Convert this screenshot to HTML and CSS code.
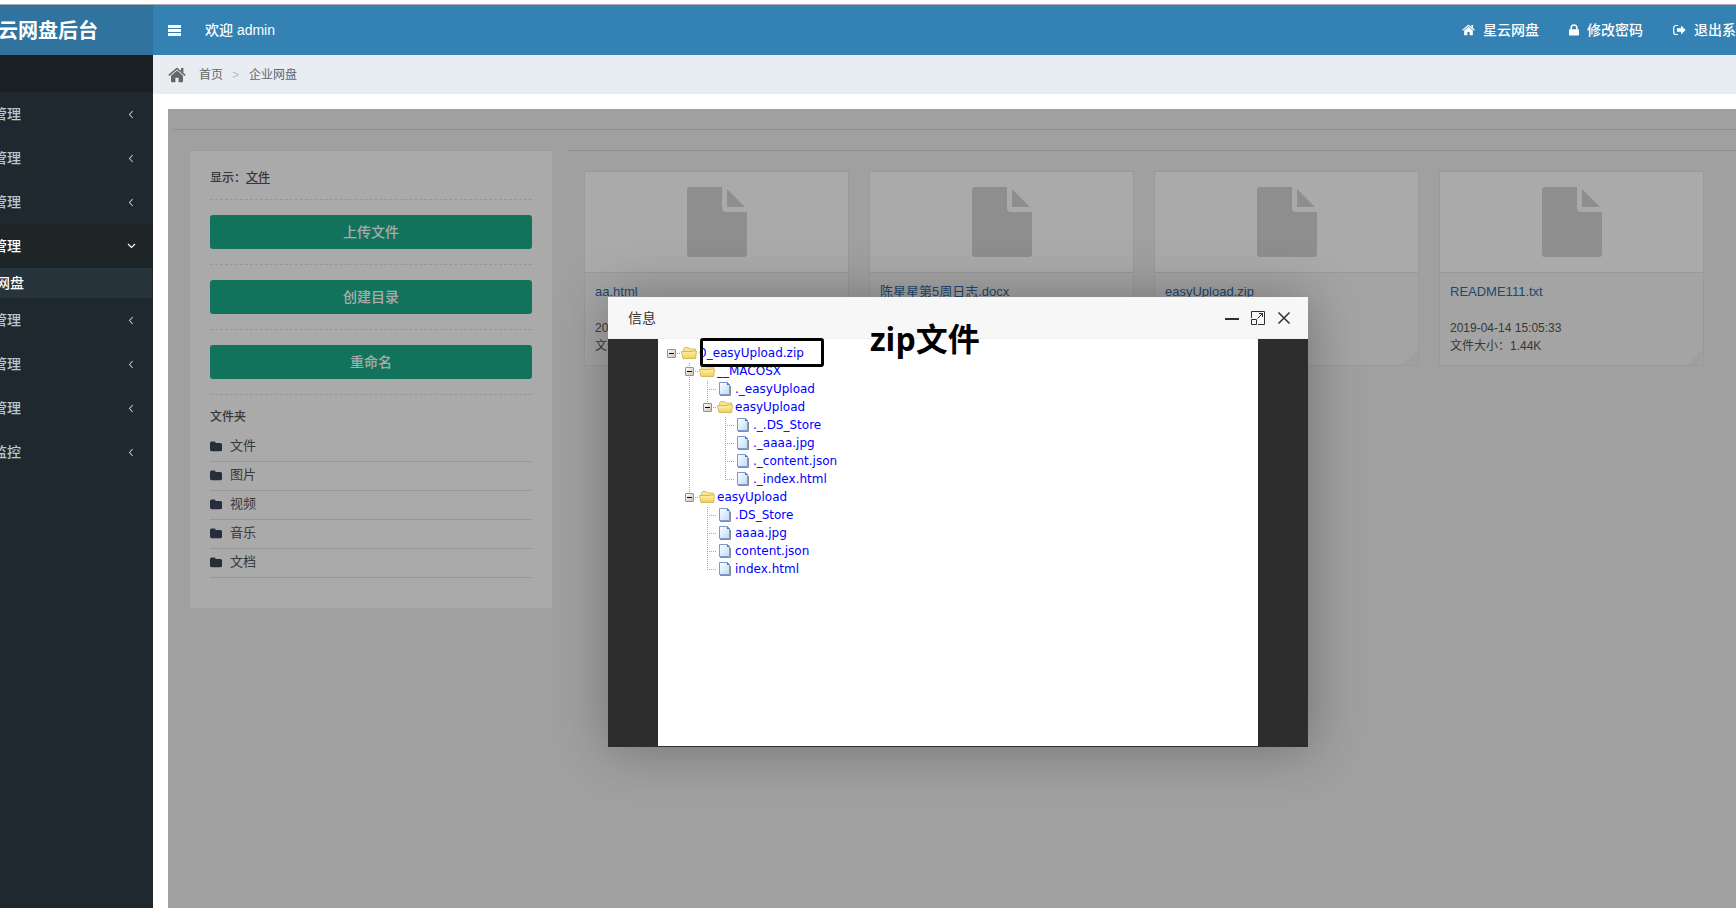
FILE: index.html
```html
<!DOCTYPE html>
<html lang="zh-CN">
<head>
<meta charset="utf-8">
<title>星云网盘后台</title>
<link rel="stylesheet" href="styles.css">
</head>
<body>
<svg class="defs" aria-hidden="true">
  <defs>
    <linearGradient id="gFolder" x1="0" y1="0" x2="0" y2="1"><stop offset="0" stop-color="#fdf3a8"/><stop offset="1" stop-color="#f0cf5e"/></linearGradient>
    <linearGradient id="gPage" x1="0" y1="0" x2="1" y2="1"><stop offset="0" stop-color="#ffffff"/><stop offset="1" stop-color="#b9dcfa"/></linearGradient>
    <linearGradient id="gBox" x1="0" y1="0" x2="1" y2="1"><stop offset="0" stop-color="#ffffff"/><stop offset="1" stop-color="#c9c2b4"/></linearGradient>
  </defs>
  <symbol id="left" viewBox="0 0 6 9"><path d="M4.700 1 1.500 4.500 4.700 8" fill="none" stroke="currentColor" stroke-width="1.100"/></symbol>
  <symbol id="down" viewBox="0 0 9 6"><path d="M1 1 4.500 4.500 8 1" fill="none" stroke="currentColor" stroke-width="1.200"/></symbol>
  <symbol id="home" viewBox="0 0 18 16"><path d="M9 3.600 15 8.700V14.500a.8.8 0 0 1-.8.8H10.600V10.800H7.400V15.300H3.800A.8.8 0 0 1 3 14.500V8.700Z" fill="currentColor"/><path d="M.8 8.400 9 1.500 17.200 8.400" fill="none" stroke="currentColor" stroke-width="1.600"/><path d="M13 1h2.400v5L13 4Z" fill="currentColor"/></symbol>
  <symbol id="lock" viewBox="0 0 10 12"><rect y="5.200" width="10" height="6.300" rx=".8" fill="currentColor"/><path d="M2.200 5.500V3.800a2.800 2.800 0 0 1 5.600 0v1.700" fill="none" stroke="currentColor" stroke-width="1.600"/></symbol>
  <symbol id="exit" viewBox="0 0 13 12"><path d="M5 1.500H3A2.300 2.300 0 0 0 .7 3.800v4.400A2.300 2.300 0 0 0 3 10.500h2" fill="none" stroke="currentColor" stroke-width="1.200"/><path d="M4 4.300h4V1.500L12.700 6 8 10.500V7.700H4Z" fill="currentColor"/></symbol>
  <symbol id="folder" viewBox="0 0 12 11"><path d="M0 2A1.500 1.500 0 0 1 1.500.5h2.700A1.400 1.400 0 0 1 5.600 1.900V2h4.900A1.500 1.500 0 0 1 12 3.500v5A1.700 1.700 0 0 1 10.300 10.300H1.700A1.700 1.700 0 0 1 0 8.600Z" fill="currentColor"/></symbol>
  <symbol id="file" viewBox="0 0 60 70"><path d="M3 0H35V21a4 4 0 0 0 4 4H60V67a3 3 0 0 1-3 3H3a3 3 0 0 1-3-3V3a3 3 0 0 1 3-3ZM40 2 58 20H40Z" fill="currentColor"/></symbol>

  <symbol id="tLine" viewBox="0 0 18 18"><path d="M9.500 1V18" class="dots"/></symbol>
  <symbol id="tJoin" viewBox="0 0 18 18"><path d="M9.500 1V18M11 9.500H18" class="dots"/></symbol>
  <symbol id="tEnd" viewBox="0 0 18 18"><path d="M9.500 1V10M11 9.500H18" class="dots"/></symbol>
  <symbol id="tBox" viewBox="0 0 18 18"><rect x="5.500" y="5.500" width="8" height="8" rx=".5" fill="url(#gBox)" stroke="#7898b5"/><path d="M7 9.500H12" stroke="#000"/><path d="M15 9.500H18" class="dots"/></symbol>
  <symbol id="tTop" viewBox="0 0 18 18"><path d="M9.500 1V5" class="dots"/></symbol>
  <symbol id="tBottom" viewBox="0 0 18 18"><path d="M9.500 15V18" class="dots"/></symbol>
  <symbol id="tFolder" viewBox="0 0 18 18"><path d="M3.500 13V4.500L4.500 3.500H8.500L9.500 5H15.500V8" fill="#f7e48c" stroke="#dcc062"/><path d="M1.500 7.500H12L13 7H16.500L15.500 14.500H3Z" fill="url(#gFolder)" stroke="#d8b955"/></symbol>
  <symbol id="tPage" viewBox="0 0 18 18"><path d="M14.500 6V15.500H4" fill="none" stroke="#8b8b98"/><path d="M3.500 2.500H11L13.500 5V14.500H3.500Z" fill="url(#gPage)" stroke="#7d98cc"/><path d="M11 2V5H14Z" fill="#3f78b4"/></symbol>
</svg>

<header class="topbar">
  <h1 class="brand">云网盘后台</h1>
  <button class="menu-toggle" type="button" aria-label="菜单"><i></i><i></i><i></i></button>
  <span class="welcome">欢迎 admin</span>
  <nav class="topnav">
    <a href="#"><svg class="i-home"><use href="#home"/></svg>星云网盘</a>
    <a href="#"><svg class="i-lock"><use href="#lock"/></svg>修改密码</a>
    <a href="#"><svg class="i-exit"><use href="#exit"/></svg>退出系统</a>
  </nav>
</header>

<div class="shell">
  <aside class="sidebar">
    <div class="side-head"></div>
    <nav>
      <a class="item" href="#">管理<svg class="chev"><use href="#left"/></svg></a>
      <a class="item" href="#">管理<svg class="chev"><use href="#left"/></svg></a>
      <a class="item" href="#">管理<svg class="chev"><use href="#left"/></svg></a>
      <a class="item open" href="#">管理<svg class="chev-down"><use href="#down"/></svg></a>
      <a class="subitem" href="#">网盘</a>
      <a class="item" href="#">管理<svg class="chev"><use href="#left"/></svg></a>
      <a class="item" href="#">管理<svg class="chev"><use href="#left"/></svg></a>
      <a class="item" href="#">管理<svg class="chev"><use href="#left"/></svg></a>
      <a class="item" href="#">监控<svg class="chev"><use href="#left"/></svg></a>
    </nav>
  </aside>

  <main class="main">
    <nav class="crumbs">
      <svg><use href="#home"/></svg>
      <a href="#">首页</a><span class="sep">&gt;</span><span>企业网盘</span>
    </nav>

    <section class="frame">
      <hr class="rule">
      <div class="columns">
        <div class="panel">
          <p class="show">显示：<a href="#">文件</a></p>
          <hr class="dash">
          <button class="btn" type="button">上传文件</button>
          <hr class="dash">
          <button class="btn" type="button">创建目录</button>
          <hr class="dash">
          <button class="btn" type="button">重命名</button>
          <hr class="dash">
          <h2>文件夹</h2>
          <ul class="folders">
            <li><a href="#"><svg><use href="#folder"/></svg>文件</a></li>
            <li><a href="#"><svg><use href="#folder"/></svg>图片</a></li>
            <li><a href="#"><svg><use href="#folder"/></svg>视频</a></li>
            <li><a href="#"><svg><use href="#folder"/></svg>音乐</a></li>
            <li><a href="#"><svg><use href="#folder"/></svg>文档</a></li>
          </ul>
        </div>
        <div class="files">
          <article class="card">
            <div class="thumb"><svg><use href="#file"/></svg></div>
            <div class="meta"><a href="#">aa.html</a><p>2019<br>文件</p></div>
          </article>
          <article class="card">
            <div class="thumb"><svg><use href="#file"/></svg></div>
            <div class="meta"><a href="#">陈星星第5周日志.docx</a></div>
          </article>
          <article class="card">
            <div class="thumb"><svg><use href="#file"/></svg></div>
            <div class="meta"><a href="#">easyUpload.zip</a></div>
          </article>
          <article class="card">
            <div class="thumb"><svg><use href="#file"/></svg></div>
            <div class="meta"><a href="#">README111.txt</a><p>2019-04-14 15:05:33<br>文件大小：1.44K</p></div>
          </article>
        </div>
      </div>

      <div class="shade"></div>
      <div class="dialog" role="dialog" aria-labelledby="dlg-title">
        <div class="dlg-head">
          <h2 id="dlg-title">信息</h2>
          <button type="button" aria-label="最小化"><svg viewBox="0 0 14 14"><path d="M0 8H14" stroke-width="2"/></svg></button>
          <button type="button" aria-label="最大化"><svg viewBox="0 0 14 14"><path d="M.5 7V.5H13.500V13.500H7M.5 8.500H5.500V13.500H.5ZM6.500 7.500 11.500 2.500M8 2.500H11.500V6"/></svg></button>
          <button type="button" aria-label="关闭"><svg viewBox="0 0 14 14"><path d="M1.500 1.500 12.500 12.500M12.500 1.500 1.500 12.500" stroke-width="1.500"/></svg></button>
        </div>
        <div class="dlg-body">
          <div class="tree">
            <div class="row"><svg><use href="#tBox"/></svg><svg><use href="#tFolder"/></svg><a href="#">0_easyUpload.zip</a></div>
            <div class="row d1"><svg><use href="#tTop"/><use href="#tBox"/><use href="#tBottom"/></svg><svg><use href="#tFolder"/></svg><a href="#">__MACOSX</a></div>
            <div class="row d1"><svg><use href="#tLine"/></svg><svg><use href="#tJoin"/></svg><svg><use href="#tPage"/></svg><a href="#">._easyUpload</a></div>
            <div class="row d1"><svg><use href="#tLine"/></svg><svg><use href="#tTop"/><use href="#tBox"/></svg><svg><use href="#tFolder"/></svg><a href="#">easyUpload</a></div>
            <div class="row d1"><svg><use href="#tLine"/></svg><svg></svg><svg><use href="#tJoin"/></svg><svg><use href="#tPage"/></svg><a href="#">._.DS_Store</a></div>
            <div class="row d1"><svg><use href="#tLine"/></svg><svg></svg><svg><use href="#tJoin"/></svg><svg><use href="#tPage"/></svg><a href="#">._aaaa.jpg</a></div>
            <div class="row d1"><svg><use href="#tLine"/></svg><svg></svg><svg><use href="#tJoin"/></svg><svg><use href="#tPage"/></svg><a href="#">._content.json</a></div>
            <div class="row d1"><svg><use href="#tLine"/></svg><svg></svg><svg><use href="#tEnd"/></svg><svg><use href="#tPage"/></svg><a href="#">._index.html</a></div>
            <div class="row d1"><svg><use href="#tTop"/><use href="#tBox"/></svg><svg><use href="#tFolder"/></svg><a href="#">easyUpload</a></div>
            <div class="row d2"><svg><use href="#tJoin"/></svg><svg><use href="#tPage"/></svg><a href="#">.DS_Store</a></div>
            <div class="row d2"><svg><use href="#tJoin"/></svg><svg><use href="#tPage"/></svg><a href="#">aaaa.jpg</a></div>
            <div class="row d2"><svg><use href="#tJoin"/></svg><svg><use href="#tPage"/></svg><a href="#">content.json</a></div>
            <div class="row d2"><svg><use href="#tEnd"/></svg><svg><use href="#tPage"/></svg><a href="#">index.html</a></div>
          </div>
        </div>
        <div class="mark-box"></div>
        <div class="mark-text">zip文件</div>
      </div>
    </section>
  </main>
</div>
</body>
</html>
```

FILE: styles.css
```css
* { box-sizing: border-box; }
body {
  margin: 0;
  min-height: 100vh;
  display: flex;
  flex-direction: column;
  overflow: hidden;
  background: #fff;
  color: #676a6c;
  font: 12px/18px "Liberation Sans", "Noto Sans CJK SC", sans-serif;
}
a { color: inherit; text-decoration: none; }
h1, h2, p, ul { margin: 0; padding: 0; }
button { border: 0; padding: 0; font-family: inherit; }
.defs { position: absolute; width: 0; height: 0; }
.dots { fill: none; stroke: #a8a8a8; stroke-dasharray: 1 1; }

/* Top bar */
.topbar {
  display: flex;
  align-items: center;
  height: 51px;
  margin-top: 4px;
  border-top: 1px solid #aaa;
  background: #3481b4;
  color: #fff;
  font-size: 14px;
  font-weight: 500;
  white-space: nowrap;
  overflow: hidden;
}
.brand {
  flex: 0 0 230px;
  align-self: stretch;
  margin-left: -77px;
  padding-left: 75px;
  background: #2f739e;
  font-size: 20px;
  font-weight: 700;
  line-height: 52px;
}
.menu-toggle {
  display: flex;
  flex-direction: column;
  gap: 1px;
  width: 13px;
  margin: 0 24px 0 15px;
  background: none;
}
.menu-toggle i { width: 13px; height: 3px; background: #fff; }
.topnav { display: flex; gap: 30px; margin-left: auto; margin-right: -14px; }
.topnav a { display: flex; align-items: center; }
.topnav svg { height: 12px; margin-right: 8px; }
.i-home, .i-exit { width: 13px; }
.i-lock { width: 10px; }

/* Sidebar */
.shell { flex: 1; display: flex; min-width: 0; }
.sidebar { flex: 0 0 230px; margin-left: -77px; background: #20282f; color: #b8c7ce; font-size: 14px; font-weight: 500; }
.side-head { height: 37px; background: #1a2024; }
.item { display: flex; align-items: center; justify-content: space-between; height: 44px; padding: 0 19px 0 70px; }
.item.open { padding-right: 17px; background: #1d2527; color: #fff; }
.subitem { display: block; margin-right: 1px; padding-left: 73px; background: #28343b; color: #fff; line-height: 30px; }
.chev { width: 6px; height: 9px; }
.chev-down { width: 9px; height: 6px; }

/* Content */
.main { flex: 1; display: flex; flex-direction: column; min-width: 0; }
.crumbs { display: flex; align-items: center; height: 39px; padding-left: 15px; background: #e8edf2; color: #666; }
.crumbs svg { width: 18px; height: 16px; margin-right: 13px; }
.crumbs .sep { margin: 0 10px 0 9px; color: #bbb; }
.frame { position: relative; flex: 1; margin: 15px 0 0 15px; padding: 20px 0 0 5px; background: #f1f1f1; }
.rule { margin: 0; border: 0; border-top: 1px solid #d6d6d6; }
.columns { display: grid; grid-template-columns: 362px 1fr; gap: 15px; align-items: start; padding: 20px 0 0 17px; }
.panel { padding: 20px 20px 30px; border-top: 1px solid #e7e7e7; background: #fff; color: #555; }
.show { line-height: 14px; font-weight: 500; }
.show a { text-decoration: underline; }
.dash { margin: 15px 0; border: 0; border-top: 1px dashed #e2e2e2; }
.show + .dash { margin-top: 14px; }
.btn { display: block; width: 100%; height: 34px; padding-bottom: 2px; border-radius: 3px; background: #1aad8b; color: #fff; font-size: 14px; font-weight: 500; }
.panel h2 { margin-bottom: 9px; font-size: 12px; line-height: 14px; font-weight: 500; }
.folders { list-style: none; font-size: 13px; }
.folders li { padding: 4px 0 6px; border-bottom: 1px solid #e4e4e4; }
.folders a { display: flex; align-items: center; }
.folders svg { width: 12px; height: 11px; margin-right: 8px; color: #394656; }

.files { display: grid; grid-template-columns: repeat(4, 1fr); gap: 20px; padding: 20px 32px 0 17px; border-top: 1px solid #d6d6d6; }
.card { display: flex; flex-direction: column; border: 1px solid #e7e7e7; background: #f7f7f7; color: #555; }
.thumb { display: flex; justify-content: center; height: 101px; padding-top: 15px; border-bottom: 1px solid #e4e4e4; background: #fff; }
.thumb svg { width: 60px; height: 70px; color: #d5d5d5; }
.meta { flex: 1; padding: 10px; background: linear-gradient(135deg, transparent 50%, #efefef 50%) right bottom / 16px 16px no-repeat; }
.meta a { display: block; color: #2f6ca8; font-size: 13px; white-space: nowrap; }
.meta p { margin-top: 18px; }

/* Dialog */
.shade { position: absolute; inset: 0; background: rgba(0, 0, 0, .333); }
.dialog { position: absolute; top: 188px; left: calc(50% - 344px); width: 700px; box-shadow: 1px 1px 50px rgba(0, 0, 0, .3); }
.dlg-head { display: flex; align-items: center; gap: 12px; height: 42px; padding: 0 17px 0 20px; border-bottom: 1px solid #eee; background: #f7f7f7; }
.dlg-head h2 { flex: 1; color: #333; font-size: 14px; font-weight: 400; }
.dlg-head button { width: 14px; height: 14px; background: none; }
.dlg-head svg { display: block; width: 14px; height: 14px; fill: none; stroke: #2e2d3c; }
.dlg-body { padding: 0 50px 1px; background: #2d2d2d; }
.tree { min-height: 407px; padding: 5px 4px; background: #fff; color: #00f; font: 12px/18px "DejaVu Sans", sans-serif; }
.row { display: flex; height: 18px; }
.row svg { flex: 0 0 18px; height: 18px; }
.row a { padding-left: 1px; }
.d1 { padding-left: 18px; }
.d2 { padding-left: 36px; }
.mark-box { position: absolute; top: 41px; left: 92px; width: 124px; height: 29px; border: 3px solid #000; border-radius: 3px; }
.mark-text { position: absolute; top: 20px; left: 262px; color: #000; font: 700 32px/44px "Open Sans", "Noto Sans CJK SC", sans-serif; }
```
